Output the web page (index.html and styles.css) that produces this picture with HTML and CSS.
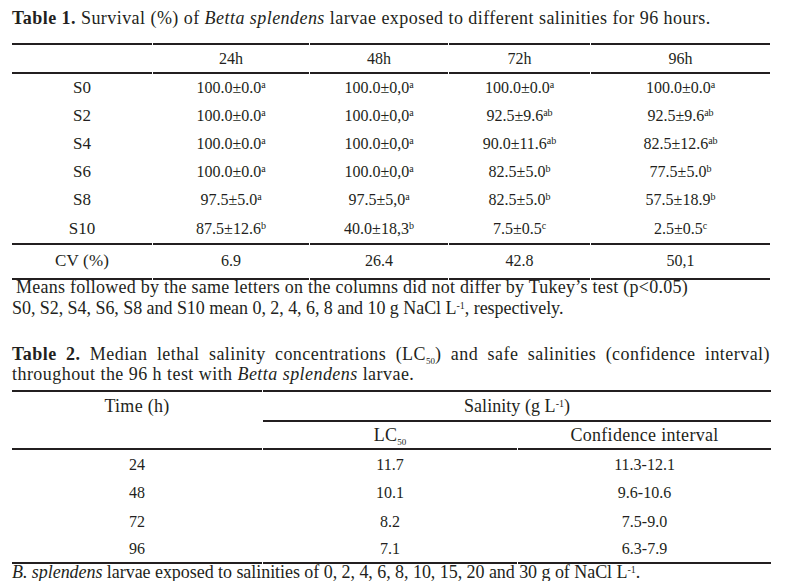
FILE: index.html
```html
<!DOCTYPE html>
<html lang="en">
<head>
<meta charset="utf-8">
<title>Tables</title>
<link rel="stylesheet" href="styles.css">
</head>
<body>
<div class="page">
  <p class="caption"><b>Table 1.</b> Survival (%) of <i>Betta splendens</i> larvae exposed to different salinities for 96 hours.</p>
  <table class="t1">
    <colgroup>
      <col class="c1"><col class="c2"><col class="c3"><col class="c4"><col class="c5">
    </colgroup>
    <thead>
      <tr><th></th><th>24h</th><th>48h</th><th>72h</th><th>96h</th></tr>
    </thead>
    <tbody>
      <tr><td class="lab">S0</td><td>100.0±0.0<sup>a</sup></td><td>100.0±0,0<sup>a</sup></td><td>100.0±0.0<sup>a</sup></td><td>100.0±0.0<sup>a</sup></td></tr>
      <tr><td class="lab">S2</td><td>100.0±0.0<sup>a</sup></td><td>100.0±0,0<sup>a</sup></td><td>92.5±9.6<sup>ab</sup></td><td>92.5±9.6<sup>ab</sup></td></tr>
      <tr><td class="lab">S4</td><td>100.0±0.0<sup>a</sup></td><td>100.0±0,0<sup>a</sup></td><td>90.0±11.6<sup>ab</sup></td><td>82.5±12.6<sup>ab</sup></td></tr>
      <tr><td class="lab">S6</td><td>100.0±0.0<sup>a</sup></td><td>100.0±0,0<sup>a</sup></td><td>82.5±5.0<sup>b</sup></td><td>77.5±5.0<sup>b</sup></td></tr>
      <tr><td class="lab">S8</td><td>97.5±5.0<sup>a</sup></td><td>97.5±5,0<sup>a</sup></td><td>82.5±5.0<sup>b</sup></td><td>57.5±18.9<sup>b</sup></td></tr>
      <tr class="last"><td class="lab">S10</td><td>87.5±12.6<sup>b</sup></td><td>40.0±18,3<sup>b</sup></td><td>7.5±0.5<sup>c</sup></td><td>2.5±0.5<sup>c</sup></td></tr>
    </tbody>
    <tfoot>
      <tr><td class="lab cv">CV (%)</td><td>6.9</td><td>26.4</td><td>42.8</td><td>50,1</td></tr>
    </tfoot>
  </table>
  <p class="note note-first">Means followed by the same letters on the columns did not differ by Tukey’s test (p&lt;0.05)</p>
  <p class="note note-second">S0, S2, S4, S6, S8 and S10 mean 0, 2, 4, 6, 8 and 10 g NaCl L<sup>-1</sup>, respectively.</p>

  <p class="caption caption2"><b>Table 2.</b> Median lethal salinity concentrations (LC<sub>50</sub>) and safe salinities (confidence interval) throughout the 96 h test with <i>Betta splendens</i> larvae.</p>
  <table class="t2">
    <colgroup>
      <col class="d1"><col class="d2"><col class="d3">
    </colgroup>
    <thead>
      <tr class="h1"><th rowspan="2" class="time">Time (h)</th><th colspan="2" class="sal">Salinity (g L<sup>-1</sup>)</th></tr>
      <tr class="h2"><th>LC<sub>50</sub></th><th>Confidence interval</th></tr>
    </thead>
    <tbody>
      <tr class="r1"><td>24</td><td>11.7</td><td>11.3-12.1</td></tr>
      <tr class="r2"><td>48</td><td>10.1</td><td>9.6-10.6</td></tr>
      <tr class="r3"><td>72</td><td>8.2</td><td>7.5-9.0</td></tr>
      <tr class="r4"><td>96</td><td>7.1</td><td>6.3-7.9</td></tr>
    </tbody>
  </table>
  <p class="foot"><i>B. splendens</i> larvae exposed to salinities of 0, 2, 4, 6, 8, 10, 15, 20 and 30 g of NaCl L<sup>-1</sup>.</p>
</div>
</body>
</html>
```

FILE: styles.css
```css
html, body {
  margin: 0;
  padding: 0;
  background: #ffffff;
}

body {
  font-family: "Liberation Serif", "Times New Roman", serif;
  font-size: 16px;
  color: #231f20;
}

.page {
  width: 758px;
  padding: 8px 0 0 12px;
}

p {
  margin: 0;
}

.caption {
  font-size: 18px;
  line-height: 20px;
  letter-spacing: 0.45px;
}

.caption b {
  font-weight: bold;
}

table {
  border-collapse: separate;
  border-spacing: 1px 0;
  width: 760px;
  margin-left: -1px;
  table-layout: fixed;
}

th, td {
  padding: 0;
  text-align: center;
  font-weight: normal;
  vertical-align: middle;
}

sup {
  font-size: 10px;
  vertical-align: 5px;
  line-height: 0;
  letter-spacing: 0;
}

sub {
  font-size: 9px;
  vertical-align: -4px;
  line-height: 0;
  letter-spacing: 0;
}

/* Table 1 */
.t1 {
  margin-top: 15px;
}

.c1 { width: 140px; }
.c2 { width: 156px; }
.c3 { width: 138px; }
.c4 { width: 141px; }
.c5 { width: 179px; }

.lab {
  font-size: 17px;
}

.cv {
  letter-spacing: 0.2px;
}

.t1 thead th {
  border-top: 2px solid #231f20;
  border-bottom: 2px solid #231f20;
  height: 27px;
}

.t1 tbody td {
  height: 28px;
}

.t1 tbody tr.last td {
  height: 29px;
  border-bottom: 2px solid #231f20;
}

.t1 tfoot td {
  height: 31px;
  padding-bottom: 2px;
  border-bottom: 2px solid #231f20;
}

.note {
  font-size: 18px;
  line-height: 21px;
  letter-spacing: 0.25px;
}

.note-first {
  padding-left: 4px;
  margin-top: -3px;
}

.note-second {
  letter-spacing: -0.05px;
}

/* Table 2 */
.caption2 {
  margin-top: 25px;
  text-align: justify;
}

.t2 {
  margin-top: 6px;
}

.d1 { width: 250px; }
.d2 { width: 254px; }
.d3 { width: 253px; }

.t2 thead th {
  font-size: 18px;
  letter-spacing: 0.3px;
}

.t2 .h1 th {
  border-top: 2px solid #231f20;
  height: 28px;
}

.t2 .h1 th.time {
  vertical-align: top;
  padding-top: 4px;
  border-bottom: 2px solid #231f20;
}

.t2 .h1 th.sal {
  border-bottom: 2px solid #231f20;
  letter-spacing: 0.05px;
}

.t2 .h2 th {
  height: 26px;
  border-bottom: 2px solid #231f20;
}

.t2 .r1 td { height: 29px; }
.t2 .r2 td { height: 28px; }
.t2 .r3 td { height: 29px; }

.t2 .r4 td {
  height: 26px;
  border-bottom: 2px solid #231f20;
}

.foot {
  font-size: 18px;
  line-height: 18px;
  letter-spacing: -0.05px;
  margin-top: -1px;
}
```
